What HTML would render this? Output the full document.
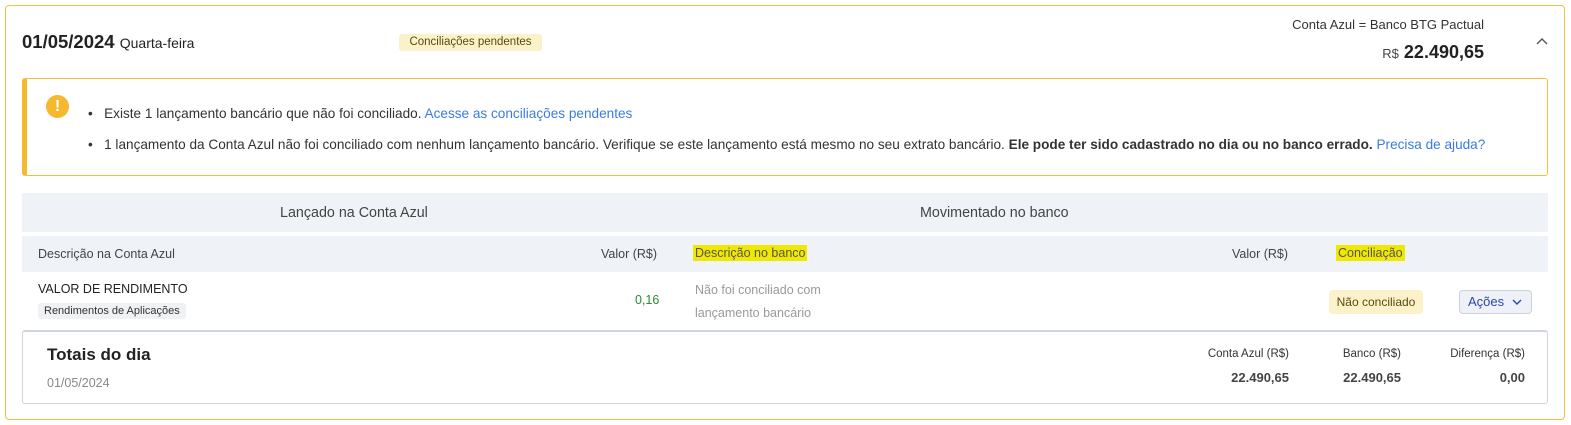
<!DOCTYPE html><html><head><meta charset="utf-8"><style>
*{box-sizing:border-box;margin:0;padding:0}
body{width:1571px;height:425px;background:#fff;font-family:"Liberation Sans",sans-serif;color:#333;position:relative;overflow:hidden}
.a{position:absolute;white-space:nowrap}
</style></head><body>
<div class="a" style="left:5px;top:5px;width:1560px;height:415px;border:1px solid #f2c040;border-radius:4px"></div>
<div class="a" style="left:22px;top:31px;font-size:18.5px;font-weight:bold;color:#222">01/05/2024 <span style="font-size:14px;font-weight:normal">Quarta-feira</span></div>
<div class="a" style="left:399px;top:34px;width:143px;height:17px;background:#fbf2c9;border-radius:3px;font-size:11.5px;line-height:17px;text-align:center;color:#5a4a10">Conciliações pendentes</div>
<div class="a" style="right:87px;top:17px;font-size:13px;color:#333">Conta Azul = Banco BTG Pactual</div>
<div class="a" style="right:87px;top:42px;font-size:18px;font-weight:bold;color:#222"><span style="font-size:13px;font-weight:normal;color:#444">R$</span> 22.490,65</div>
<svg class="a" style="left:1535px;top:37px" width="14" height="10"><path d="M2 7L7 2L12 7" fill="none" stroke="#555" stroke-width="1.4"/></svg>
<div class="a" style="left:22px;top:78px;width:1526px;height:98px;border:1px solid #f2c040;border-left:5px solid #f5b82e;border-radius:3px"></div>
<div class="a" style="left:46px;top:95px;width:23px;height:23px;border-radius:50%;background:#f5b82e;color:#fff;font-weight:bold;font-size:16px;text-align:center;line-height:23px">!</div>
<div class="a" style="left:88px;top:106px;font-size:13.6px;color:#333">•&nbsp;&nbsp; Existe 1 lançamento bancário que não foi conciliado. <span style="color:#3b7be0">Acesse as conciliações pendentes</span></div>
<div class="a" style="left:88px;top:137px;font-size:13.6px;color:#333">•&nbsp;&nbsp; 1 lançamento da Conta Azul não foi conciliado com nenhum lançamento bancário. Verifique se este lançamento está mesmo no seu extrato bancário. <b>Ele pode ter sido cadastrado no dia ou no banco errado.</b> <span style="color:#3b7be0">Precisa de ajuda?</span></div>
<div class="a" style="left:22px;top:193px;width:1526px;height:39px;background:#eff2f7"></div>
<div class="a" style="left:22px;top:236px;width:1526px;height:36px;background:#eff2f7"></div>
<div class="a" style="left:280px;top:205px;font-size:14.3px;color:#444">Lançado na Conta Azul</div>
<div class="a" style="left:920px;top:205px;font-size:14.3px;color:#444">Movimentado no banco</div>
<div class="a" style="left:38px;top:247px;font-size:12.5px;color:#444">Descrição na Conta Azul</div>
<div class="a" style="left:601px;top:247px;font-size:12.5px;color:#444">Valor (R$)</div>
<div class="a" style="left:693px;top:245px;font-size:12.5px;color:#555;background:#f0e800;padding:1px 2px">Descrição no banco</div>
<div class="a" style="left:1232px;top:247px;font-size:12.5px;color:#444">Valor (R$)</div>
<div class="a" style="left:1336px;top:245px;font-size:12.5px;color:#555;background:#f0e800;padding:1px 2px">Conciliação</div>
<div class="a" style="left:38px;top:282px;font-size:12.5px;color:#222">VALOR DE RENDIMENTO</div>
<div class="a" style="left:38px;top:303px;height:16px;padding:0 6px;background:#f0f1f3;border-radius:3px;font-size:11px;line-height:16px;color:#333">Rendimentos de Aplicações</div>
<div class="a" style="left:635px;top:293px;font-size:12.5px;color:#2a8a3a">0,16</div>
<div class="a" style="left:695px;top:279px;font-size:12.5px;color:#999;line-height:23px">Não foi conciliado com<br>lançamento bancário</div>
<div class="a" style="left:1329px;top:290px;width:94px;height:24px;background:#fbf2c9;border-radius:4px;font-size:12px;line-height:24px;text-align:center;color:#5a4a10">Não conciliado</div>
<div class="a" style="left:1459px;top:290px;width:73px;height:24px;background:#eef1f8;border:1px solid #c9d0de;border-radius:4px;font-size:13px;line-height:22px;color:#2a47a8;padding-left:8px">Ações <svg width="12" height="8" style="margin-left:3px"><path d="M2 2L6 6L10 2" fill="none" stroke="#2a47a8" stroke-width="1.4"/></svg></div>
<div class="a" style="left:22px;top:330px;width:1526px;height:74px;border:1px solid #cfd5df;border-top:2px solid #cfd5df;border-radius:3px"></div>
<div class="a" style="left:47px;top:345px;font-size:17px;font-weight:bold;color:#222">Totais do dia</div>
<div class="a" style="left:47px;top:376px;font-size:12.5px;color:#888">01/05/2024</div>
<div class="a" style="right:282px;top:348px;font-size:11.5px;color:#333">Conta Azul (R$)</div>
<div class="a" style="right:282px;top:370px;font-size:13px;font-weight:bold;color:#444">22.490,65</div>
<div class="a" style="right:170px;top:348px;font-size:11.5px;color:#333">Banco (R$)</div>
<div class="a" style="right:170px;top:370px;font-size:13px;font-weight:bold;color:#444">22.490,65</div>
<div class="a" style="right:46px;top:348px;font-size:11.5px;color:#333">Diferença (R$)</div>
<div class="a" style="right:46px;top:370px;font-size:13px;font-weight:bold;color:#444">0,00</div>
</body></html>
